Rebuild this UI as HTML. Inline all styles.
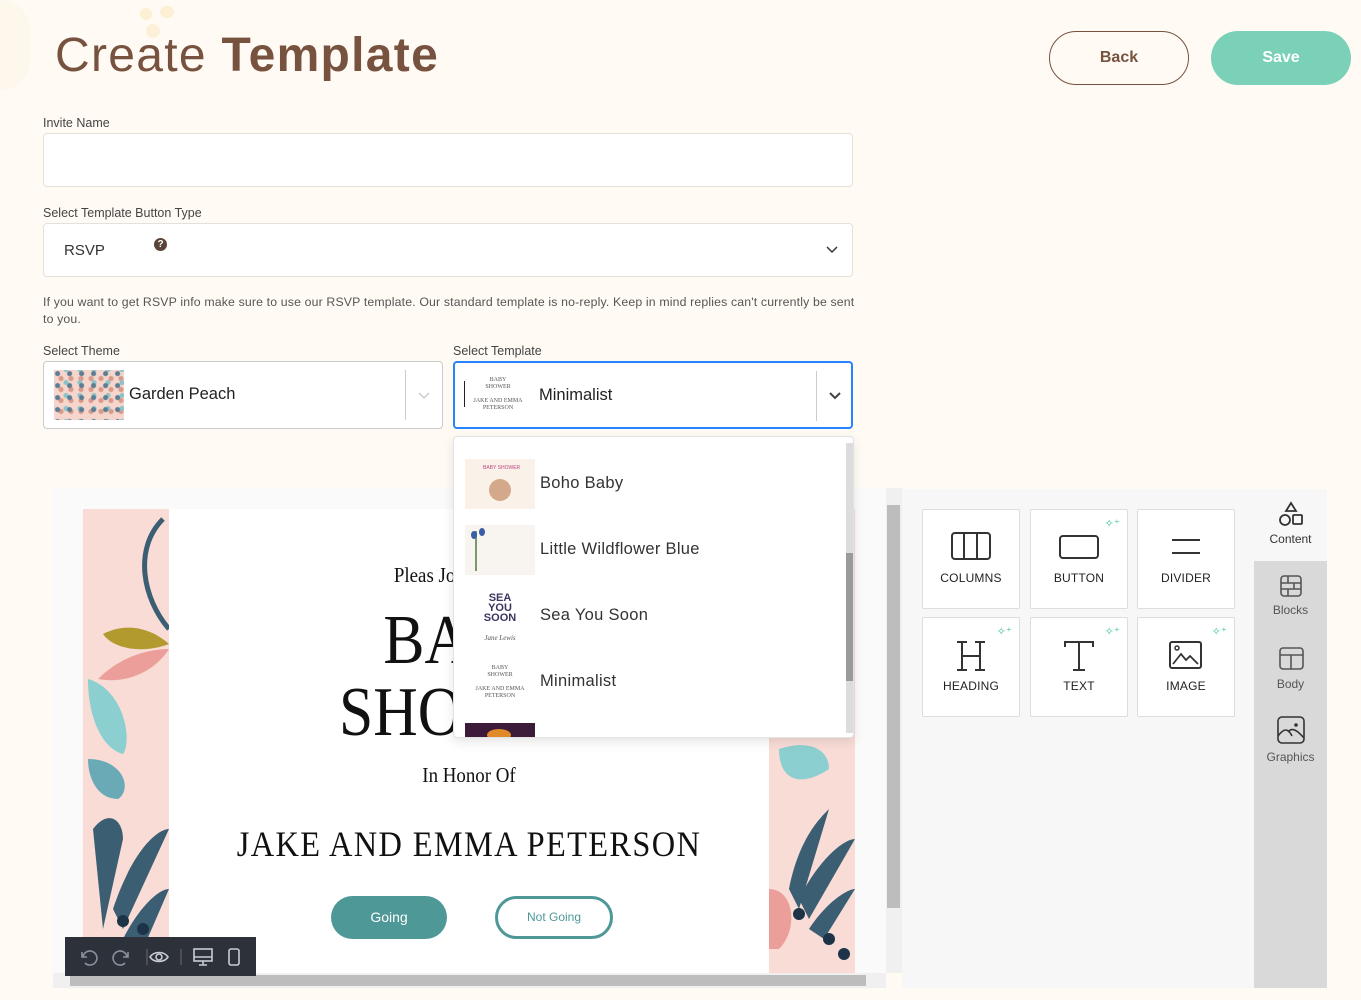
<!DOCTYPE html>
<html><head><meta charset="utf-8">
<style>
*{box-sizing:border-box;margin:0;padding:0}
body{width:1361px;height:1000px;overflow:hidden;background:#fffbf4;font-family:"Liberation Sans",sans-serif;position:relative;color:#333}
.a{position:absolute}
.lbl{font-size:12.5px;color:#444}
.inp{background:#fff;border:1px solid #e4e0da;border-radius:4px}
.tile{position:absolute;width:98px;height:100px;background:#fff;border:1px solid #ddd;border-radius:2px;text-align:center;font-size:12px;color:#222;letter-spacing:.2px}
.tile svg{position:absolute;left:28px;top:22px}
.tile span{position:absolute;left:0;right:0;top:61px}
.spark{position:absolute;right:7px;top:7px;color:#3cc4a0;font-size:11px}
.tab{position:absolute;left:1254px;width:73px;text-align:center;font-size:12px;color:#555}
.opt{position:absolute;left:11px;height:50px;width:380px}
.opt .th{position:absolute;left:0;top:0;width:70px;height:50px;background:#f8f5f0}
.opt .tx{position:absolute;left:75px;top:15px;font-size:16.5px;color:#333;letter-spacing:.3px}
.serif{font-family:"Liberation Serif",serif;color:#111;font-weight:normal;white-space:nowrap}
.c{position:absolute;left:86px;width:600px;text-align:center}
</style></head><body>

<div class="a" style="left:140px;top:8px;width:12px;height:12px;border-radius:50%;background:#fdefd3"></div>
<div class="a" style="left:160px;top:6px;width:14px;height:12px;border-radius:50%;background:#fdefd3"></div>
<div class="a" style="left:146px;top:24px;width:14px;height:14px;border-radius:50%;background:#fdf0d8"></div>
<div class="a" style="left:0;top:0;width:30px;height:90px;border-radius:0 60px 60px 0;background:#fdf7ec"></div>

<div class="a" style="left:55px;top:28px;font-size:48px;color:#76523f;letter-spacing:1.3px;line-height:56px">Create <b>Template</b></div>

<div class="a" style="left:1049px;top:31px;width:140px;height:54px;border:1.5px solid #76523f;border-radius:27px;text-align:center;line-height:51px;font-weight:bold;font-size:16px;color:#76523f">Back</div>
<div class="a" style="left:1211px;top:31px;width:140px;height:54px;background:#7ad1b8;border-radius:27px;text-align:center;line-height:54px;font-weight:bold;font-size:16px;color:#fff">Save</div>

<div class="a lbl" style="left:43px;top:116px">Invite Name</div>
<div class="a inp" style="left:43px;top:133px;width:810px;height:54px"></div>

<div class="a lbl" style="left:43px;top:206px">Select Template Button Type</div>
<div class="a inp" style="left:43px;top:223px;width:810px;height:54px">
 <div class="a" style="left:20px;top:18px;font-size:15px;color:#333">RSVP</div>
 <div class="a" style="left:110px;top:14px;width:13px;height:13px;border-radius:50%;background:#5a4438;color:#fff;font-size:10px;font-weight:bold;text-align:center;line-height:13px">?</div>
 <svg class="a" style="left:782px;top:22px" width="12" height="8"><path d="M1 1l5 5 5-5" fill="none" stroke="#333" stroke-width="1.5"/></svg>
</div>

<div class="a" style="left:43px;top:294px;width:812px;font-size:12.3px;line-height:17px;color:#555;letter-spacing:.15px">If you want to get RSVP info make sure to use our RSVP template. Our standard template is no-reply. Keep in mind replies can't currently be sent to you.</div>

<div class="a lbl" style="left:43px;top:344px">Select Theme</div>
<div class="a lbl" style="left:453px;top:344px">Select Template</div>
<div class="a inp" style="left:43px;top:361px;width:400px;height:68px;border-color:#ccc">
 <div class="a" style="left:10px;top:8px;width:70px;height:50px;background:radial-gradient(circle at 30% 30%,#5a7d92 2px,transparent 3px) 0 0/12px 12px,radial-gradient(circle,#8cc3c6 2px,transparent 3px) 5px 6px/14px 13px,radial-gradient(circle,#d99a88 2px,transparent 3px) 2px 3px/10px 11px,#f5d5cc"></div>
 <div class="a" style="left:85px;top:23px;font-size:16.5px;color:#222">Garden Peach</div>
 <div class="a" style="left:361px;top:8px;width:1px;height:50px;background:#ccc"></div>
 <svg class="a" style="left:374px;top:30px" width="12" height="8"><path d="M1 1l5 5 5-5" fill="none" stroke="#ccc" stroke-width="1.5"/></svg>
</div>
<div class="a" style="left:453px;top:361px;width:400px;height:68px;background:#fff;border:2px solid #2684ff;border-radius:4px">
 <div class="a" style="left:8px;top:6px;width:70px;height:52px;background:#fff;font-family:'Liberation Serif',serif;font-size:6px;text-align:center;color:#555;line-height:7px;padding-top:8px">BABY<br>SHOWER<br><br>JAKE AND EMMA PETERSON</div>
 <div class="a" style="left:9px;top:18px;width:1px;height:26px;background:#222"></div>
 <div class="a" style="left:84px;top:23px;font-size:16.5px;color:#222">Minimalist</div>
 <div class="a" style="left:361px;top:8px;width:1px;height:50px;background:#ccc"></div>
 <svg class="a" style="left:374px;top:29px" width="12" height="8"><path d="M1 1l5 5 5-5" fill="none" stroke="#444" stroke-width="2"/></svg>
</div>

<div class="a" style="left:53px;top:488px;width:833px;height:500px;background:#fafafa"></div>
<div class="a" style="left:83px;top:509px;width:772px;height:464px;background:#fff;overflow:hidden">
 <div class="a" style="left:0;top:0;width:86px;height:464px;background:#f9dcd6"></div>
 <div class="a" style="left:686px;top:0;width:86px;height:464px;background:#f9dcd6"></div>
 <svg class="a" style="left:0;top:0" width="86" height="464">
  <path d="M80 10 C50 40 60 90 86 120" fill="none" stroke="#3b5e73" stroke-width="5"/>
  <path d="M20 125 C50 110 75 125 86 135 C60 145 30 140 20 125Z" fill="#b29a2f"/>
  <path d="M15 170 C40 145 70 140 86 140 C70 165 40 175 15 170Z" fill="#ec9f9a"/>
  <path d="M5 170 C40 180 50 230 40 245 C20 240 5 210 5 170Z" fill="#8ccfd0"/>
  <path d="M5 250 C40 250 50 280 35 290 C15 290 5 270 5 250Z" fill="#6aa9b6"/>
  <path d="M10 320 C25 300 40 310 40 330 L20 420Z M30 400 C50 340 75 320 86 320 L40 420Z M40 430 C55 400 75 380 86 380 L60 440Z" fill="#3b5e73"/>
  <circle cx="40" cy="412" r="6" fill="#1d3347"/><circle cx="60" cy="420" r="6" fill="#1d3347"/><circle cx="75" cy="438" r="6" fill="#1d3347"/>
 </svg>
 <svg class="a" style="left:686px;top:0" width="86" height="464">
  <path d="M0 90 C30 100 40 120 30 140 C10 130 0 110 0 90Z" fill="#3b5e73"/>
  <path d="M10 240 C40 230 60 240 60 260 C30 280 10 270 10 240Z" fill="#8ccfd0"/>
  <path d="M20 380 C30 330 50 310 60 300 L30 400Z M30 390 C50 350 75 330 86 330 L40 410Z M40 420 C60 390 80 380 86 380 L55 430Z" fill="#3b5e73"/>
  <path d="M0 380 C25 380 30 420 10 440 L0 440Z" fill="#ec9f9a"/>
  <circle cx="30" cy="405" r="6" fill="#1d3347"/><circle cx="60" cy="430" r="6" fill="#1d3347"/><circle cx="75" cy="445" r="6" fill="#1d3347"/>
 </svg>
 <div class="c serif" style="top:54px;font-size:21px;transform:scaleX(.9)">Pleas Join Us For A</div>
 <div class="c serif" style="top:94px;font-size:70px;line-height:76px;transform:scaleX(.88)">BABY</div>
 <div class="c serif" style="top:166px;font-size:70px;line-height:76px;transform:scaleX(.88)">SHOWER</div>
 <div class="c serif" style="top:254px;font-size:21px;transform:scaleX(.9)">In Honor Of</div>
 <div class="c serif" style="top:314px;font-size:36px;letter-spacing:1.5px;transform:scaleX(.9)">JAKE AND EMMA PETERSON</div>
 <div class="a" style="left:248px;top:387px;width:116px;height:43px;border-radius:22px;background:#4e9898;color:#fff;text-align:center;line-height:43px;font-size:14px">Going</div>
 <div class="a" style="left:412px;top:387px;width:118px;height:43px;border-radius:22px;border:3px solid #4e9898;color:#4e9898;text-align:center;line-height:37px;font-size:12px">Not Going</div>
</div>
<div class="a" style="left:886px;top:488px;width:16px;height:485px;background:#f0f0f0"></div>
<div class="a" style="left:887px;top:505px;width:13px;height:403px;background:#bdbdbd"></div>
<div class="a" style="left:53px;top:973px;width:833px;height:15px;background:#f0f0f0"></div>
<div class="a" style="left:70px;top:975px;width:796px;height:11px;background:#bdbdbd"></div>

<div class="a" style="left:65px;top:937px;width:191px;height:39px;background:#2c313a">
 <svg class="a" style="left:12px;top:10px" width="170" height="20" fill="none" stroke="#8b919b" stroke-width="1.6">
  <path d="M5 5v5h5M6 10a7 7 0 1 1 2 6"/>
  <path d="M51 5v5h-5M50 10a7 7 0 1 0 -2 6"/>
  <line x1="70" y1="2" x2="70" y2="18" stroke="#555"/>
  <path d="M73 10c4-6 14-6 18 0c-4 6-14 6-18 0z" stroke="#c8ccd2"/><circle cx="82" cy="10" r="3" stroke="#c8ccd2"/>
  <line x1="104" y1="2" x2="104" y2="18" stroke="#555"/>
  <rect x="117" y="2" width="18" height="12" stroke="#c8ccd2"/><path d="M117 10h18M122 18h8M126 14v4" stroke="#c8ccd2"/>
  <rect x="152" y="2" width="10" height="16" rx="2" stroke="#c8ccd2"/>
 </svg>
</div>

<div class="a" style="left:902px;top:489px;width:352px;height:499px;background:#f7f7f7"></div>
<div class="tile" style="left:922px;top:509px"><svg width="40" height="28"><rect x="1" y="1" width="38" height="26" rx="3" fill="none" stroke="#333" stroke-width="2"/><path d="M13 1v26M26 1v26" stroke="#333" stroke-width="2"/></svg><span>COLUMNS</span></div>
<div class="tile" style="left:1030px;top:509px"><div class="spark">✧⁺</div><svg width="40" height="28"><rect x="1" y="4" width="38" height="22" rx="3" fill="none" stroke="#333" stroke-width="2"/></svg><span>BUTTON</span></div>
<div class="tile" style="left:1137px;top:509px"><svg width="40" height="28"><path d="M6 8h28M6 21h28" stroke="#333" stroke-width="2"/></svg><span>DIVIDER</span></div>
<div class="tile" style="left:922px;top:617px"><div class="spark">✧⁺</div><svg width="40" height="32"><path d="M6 2h10M24 2h10M6 30h10M24 30h10M11 2v28M29 2v28M11 16h18" stroke="#333" stroke-width="2" fill="none"/></svg><span>HEADING</span></div>
<div class="tile" style="left:1030px;top:617px"><div class="spark">✧⁺</div><svg width="40" height="32"><path d="M6 7V2h28v5M20 2v28M14 30h12" stroke="#333" stroke-width="2" fill="none"/></svg><span>TEXT</span></div>
<div class="tile" style="left:1137px;top:617px"><div class="spark">✧⁺</div><svg width="40" height="32"><rect x="4" y="2" width="31" height="26" rx="2" fill="none" stroke="#333" stroke-width="2"/><circle cx="11" cy="8" r="2" fill="none" stroke="#333" stroke-width="1.5"/><path d="M7 24l8-10 5 6 4-4 8 8" fill="none" stroke="#333" stroke-width="1.8"/></svg><span>IMAGE</span></div>

<div class="a" style="left:1254px;top:489px;width:73px;height:499px;background:#d9d9d9"></div>
<div class="a" style="left:1254px;top:489px;width:73px;height:72px;background:#f7f7f7"></div>
<div class="tab" style="top:501px"><svg width="26" height="26" fill="none" stroke="#333" stroke-width="1.8"><path d="M13 2l5 8h-10z"/><circle cx="7" cy="19" r="5"/><rect x="15" y="14" width="9" height="9" rx="1"/></svg><div style="color:#333;margin-top:2px">Content</div></div>
<div class="tab" style="top:575px"><svg width="24" height="22" fill="none" stroke="#555" stroke-width="1.6"><rect x="2" y="1" width="20" height="20" rx="3"/><path d="M2 8h20M2 14h20M9 1v7M15 8v6M9 14v7"/></svg><div style="margin-top:3px">Blocks</div></div>
<div class="tab" style="top:647px"><svg width="26" height="24" fill="none" stroke="#555" stroke-width="1.6"><rect x="2" y="1" width="23" height="21" rx="3"/><path d="M2 8h23M13 8v14"/></svg><div style="margin-top:3px">Body</div></div>
<div class="tab" style="top:716px"><svg width="30" height="30" fill="none" stroke="#333" stroke-width="1.6"><rect x="2" y="1" width="26" height="26" rx="4"/><path d="M2 20c6-8 10-8 14 0M12 16c4-5 9-2 16 6"/><circle cx="20" cy="9" r="1" fill="#333"/></svg><div style="margin-top:1px">Graphics</div></div>

<div class="a" style="left:453px;top:436px;width:401px;height:302px;background:#fff;border:1px solid #e2e2e2;border-radius:4px;box-shadow:0 4px 11px rgba(0,0,0,.1);overflow:hidden">
 <div class="a" style="left:392px;top:6px;width:8px;height:290px;background:#dcdcdc"></div>
 <div class="a" style="left:392px;top:116px;width:8px;height:128px;background:#9a9a9a"></div>
 <div class="opt" style="top:22px"><div class="th" style="background:#faf1e8"><div class="a" style="left:24px;top:20px;width:22px;height:22px;border-radius:50%;background:#d4a88a"></div><div class="a" style="left:18px;top:6px;font-size:5px;color:#b48;">BABY SHOWER</div></div><div class="tx">Boho Baby</div></div>
 <div class="opt" style="top:88px"><div class="th"><div class="a" style="left:10px;top:6px;width:14px;height:40px;border-left:2px solid #7a9a6a"></div><div class="a" style="left:6px;top:6px;width:6px;height:8px;border-radius:50%;background:#3b5ea8"></div><div class="a" style="left:14px;top:3px;width:6px;height:8px;border-radius:50%;background:#3b5ea8"></div></div><div class="tx">Little Wildflower Blue</div></div>
 <div class="opt" style="top:154px"><div class="th" style="background:#fff;text-align:center;font-weight:900;color:#3a3660;font-size:11px;line-height:10px;padding-top:2px">SEA<br>YOU<br>SOON<div style="font-family:'Liberation Serif',serif;font-style:italic;font-weight:normal;font-size:7px;color:#555;margin-top:10px">Jane Lewis</div></div><div class="tx">Sea You Soon</div></div>
 <div class="opt" style="top:220px"><div class="th" style="background:#fff;font-family:'Liberation Serif',serif;font-size:6px;text-align:center;color:#555;line-height:7px;padding-top:8px">BABY<br>SHOWER<br><br>JAKE AND EMMA PETERSON</div><div class="tx">Minimalist</div></div>
 <div class="a" style="left:11px;top:286px;width:70px;height:16px;background:#3b1a3a"><div class="a" style="left:22px;top:6px;width:24px;height:12px;border-radius:50%;background:#e08a2a"></div></div>
</div>

</body></html>
